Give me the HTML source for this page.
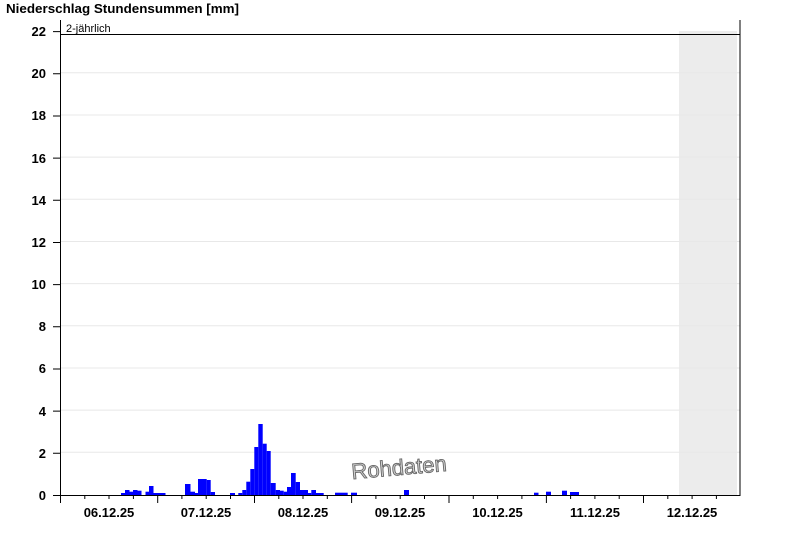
<!DOCTYPE html>
<html><head><meta charset="utf-8"><style>
html,body{margin:0;padding:0;background:#fff;width:800px;height:550px;overflow:hidden}
svg{display:block}
text{font-family:"Liberation Sans",Arial,sans-serif}
</style></head><body>
<svg width="800" height="550" viewBox="0 0 800 550" xmlns="http://www.w3.org/2000/svg">
<text x="6" y="13" font-size="13" font-weight="bold" fill="#000" textLength="233" lengthAdjust="spacingAndGlyphs">Niederschlag Stundensummen [mm]</text>
<rect x="679" y="31" width="58" height="464" fill="#ececec"/>
<g stroke="#e8e8e8" stroke-width="1">
<line x1="61" x2="740" y1="452.3" y2="452.3"/><line x1="61" x2="740" y1="410.1" y2="410.1"/>
<line x1="61" x2="740" y1="368" y2="368"/><line x1="61" x2="740" y1="325.8" y2="325.8"/>
<line x1="61" x2="740" y1="283.6" y2="283.6"/><line x1="61" x2="740" y1="241.5" y2="241.5"/>
<line x1="61" x2="740" y1="199.3" y2="199.3"/><line x1="61" x2="740" y1="157.1" y2="157.1"/>
<line x1="61" x2="740" y1="115" y2="115"/><line x1="61" x2="740" y1="72.8" y2="72.8"/>
</g>
<g fill="#0000ff">
<rect x="121" y="493" width="4" height="2"/><rect x="125" y="490" width="4.5" height="5"/><rect x="129.5" y="491.7" width="3.5" height="3.3"/><rect x="133" y="490" width="4.5" height="5"/><rect x="137.5" y="490.7" width="4" height="4.3"/>
<rect x="145.5" y="491.7" width="3.5" height="3.3"/><rect x="149" y="486" width="4.5" height="9"/><rect x="153.5" y="493" width="12" height="2"/>
<rect x="185" y="484" width="5.5" height="11"/><rect x="190.5" y="491.7" width="4.5" height="3.3"/><rect x="195" y="493" width="3" height="2"/><rect x="198" y="479" width="8.7" height="16"/><rect x="206.7" y="480" width="4" height="15"/><rect x="210.7" y="492" width="4.3" height="3"/>
<rect x="230" y="493" width="5" height="2"/><rect x="238.3" y="493" width="4" height="2"/><rect x="242.3" y="490" width="4" height="5"/><rect x="246.3" y="481.7" width="4" height="13.3"/><rect x="250.3" y="469" width="4" height="26"/><rect x="254.3" y="447" width="4" height="48"/><rect x="258.3" y="424" width="4.4" height="71"/><rect x="262.7" y="443.7" width="4" height="51.3"/><rect x="266.7" y="451" width="4" height="44"/><rect x="270.7" y="483" width="5" height="12"/><rect x="275.7" y="490" width="4.3" height="5"/><rect x="280" y="490.7" width="3.7" height="4.3"/><rect x="283.7" y="491.7" width="3.3" height="3.3"/><rect x="287" y="487" width="4" height="8"/><rect x="291" y="473" width="4.7" height="22"/><rect x="295.7" y="482" width="4.3" height="13"/><rect x="300" y="490" width="8" height="5"/><rect x="308" y="493" width="3.3" height="2"/><rect x="311.3" y="490" width="4.7" height="5"/><rect x="316" y="493" width="7.7" height="2"/>
<rect x="335" y="492.7" width="12.7" height="2.3"/><rect x="351" y="492.7" width="6" height="2.3"/><rect x="404" y="490" width="5" height="5"/>
<rect x="534" y="492.7" width="4.5" height="2.3"/><rect x="546" y="491.7" width="5" height="3.3"/><rect x="562" y="490.7" width="5" height="4.3"/><rect x="570" y="492" width="9" height="3"/>
</g>
<line x1="60.5" x2="740" y1="34.5" y2="34.5" stroke="#000"/>
<text x="66" y="32" font-size="11" fill="#000">2-jährlich</text>
<g stroke="#000" stroke-width="1" fill="none">
<line x1="60.5" x2="60.5" y1="20" y2="496"/><line x1="740" x2="740" y1="20" y2="496"/>
<line x1="60" x2="740.5" y1="495.5" y2="495.5"/>
<path d="M53 495.5H60M53 453.3H60M53 411.1H60M53 369H60M53 326.8H60M53 284.6H60M53 242.5H60M53 200.3H60M53 158.1H60M53 116H60M53 73.8H60M53 31.6H60"/>
<path d="M60.5 495v8M157.7 495v8M254.5 495v8M351.6 495v8M449 495v8M546.4 495v8M643.5 495v8"/>
<path d="M84.8 495v4M109 495v4M133.4 495v4M181.9 495v4M206.2 495v4M230.5 495v4M278.8 495v4M303 495v4M327.3 495v4M375.9 495v4M400.2 495v4M424.5 495v4M473.3 495v4M497.6 495v4M521.9 495v4M570.6 495v4M594.9 495v4M619.2 495v4M667.8 495v4M692.1 495v4M716.4 495v4"/>
</g>
<g font-size="13" font-weight="bold" fill="#000" text-anchor="end">
<text x="46" y="500">0</text><text x="46" y="458">2</text><text x="46" y="416">4</text><text x="46" y="373">6</text><text x="46" y="331">8</text><text x="46" y="289">10</text><text x="46" y="247">12</text><text x="46" y="205">14</text><text x="46" y="163">16</text><text x="46" y="120">18</text><text x="46" y="78">20</text><text x="46" y="36">22</text>
</g>
<g font-size="13" font-weight="bold" fill="#000" text-anchor="middle">
<text x="109" y="517">06.12.25</text><text x="206" y="517">07.12.25</text><text x="303" y="517">08.12.25</text><text x="400" y="517">09.12.25</text><text x="497.5" y="517">10.12.25</text><text x="595" y="517">11.12.25</text><text x="692" y="517">12.12.25</text>
</g>
<text x="399" y="475" font-size="22" text-anchor="middle" fill="#d0d0d0" stroke="#666" stroke-width="0.9" transform="rotate(-5 399 467)">Rohdaten</text>
</svg>
</body></html>
